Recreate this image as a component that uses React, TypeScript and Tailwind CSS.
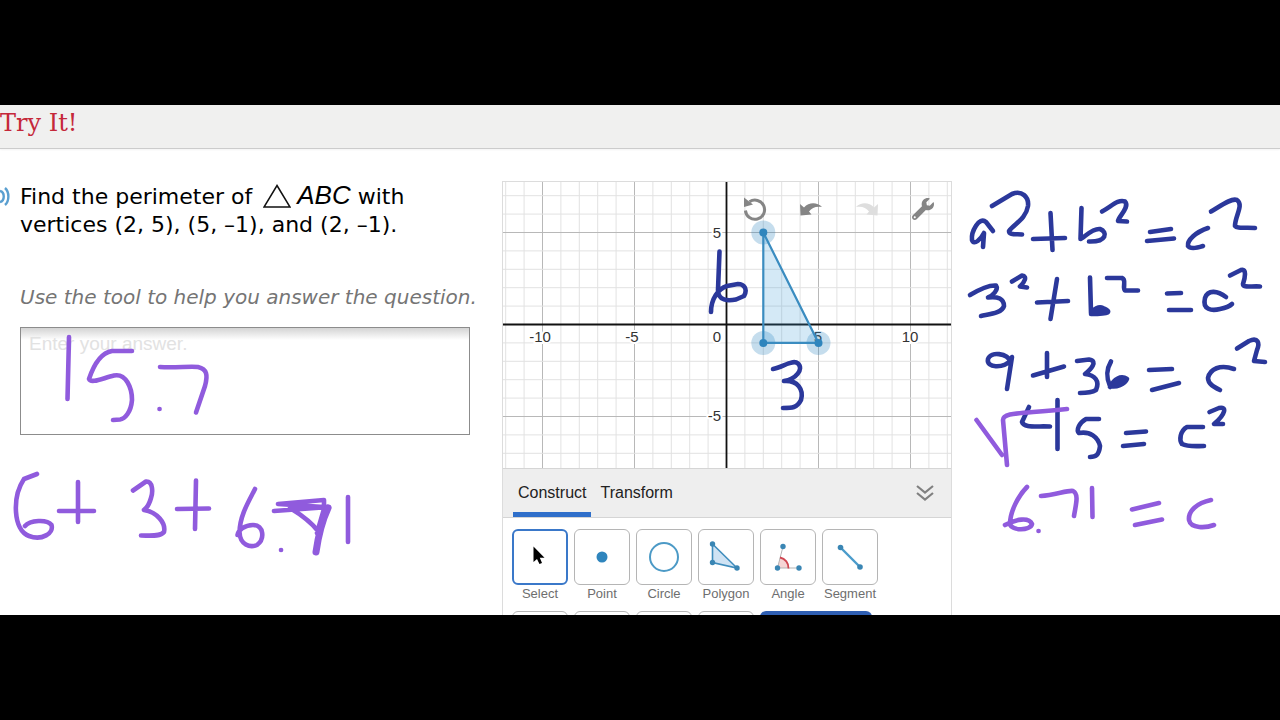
import { useState } from "react";
import type { ReactNode } from "react";
import { FaWrench } from "react-icons/fa";

const UNIT = 18.4;
const OX = 223.5;
const OY = 142.5;

const px = (x: number) => OX + x * UNIT;
const py = (y: number) => OY - y * UNIT;

const columns = Array.from({ length: 25 }, (_, i) => i - 12);
const rows = Array.from({ length: 15 }, (_, i) => i - 7);

const vertices = [
  { x: 2, y: 5 },
  { x: 5, y: -1 },
  { x: 2, y: -1 },
];

const blueInk = [
  // labels on the triangle
  "M719.5 251.5L718 290C718 301 728 301 736 299.5L744 296C748 289 744 284 738 284L727 286C718 289 711 299 711 312",
  "M773 369C783 367 793 359 798 363.5C804 369 796 379 784 381C798 380 804 390 801 400C797 408 792 408 783 408",
  // a2 + b2 = c2
  "M993 231L986 222C979 216 971 232 972 240C974 246 981 239 984 233L983 247",
  "M992 206L1012 194C1022 190 1029 197 1028 206C1026 219 1014 224 1009 231C1009 235 1015 234 1022 234.5",
  "M1050.5 213L1052.5 250M1033 239L1065 238",
  "M1081.5 208L1080.5 239C1084 238 1092 228 1100 229C1108 232 1107 242 1089 241.5",
  "M1102 211.5C1112 206 1118 199 1125 201.5C1130 207 1119 216 1118 221L1127 221.5",
  "M1150 232L1171 229M1147 241L1174 238.5",
  "M1208 228C1196 232 1187 240 1188 246C1190 249 1197 248 1203 246",
  "M1211 211.5C1222 205 1231 198 1237 200C1244 205 1235 216 1235 226C1237 229 1246 227 1255 228",
  // 3 squared + b2 = c2
  "M970 295C980 289 990 285 996 285.5C999 290 992 296 988 297.5C998 296 1004 299 1004 306C1002 313 990 314 981 316",
  "M1012 281.5L1022 275.5C1028 276 1024 283 1020 286.5L1027 287.5",
  "M1057 279L1050.5 319M1037 302.5L1068 301",
  "M1090 277.5L1091 313C1093 309 1099 306 1103 308C1112 312 1110 314 1091 314M1096 311L1107 312",
  "M1107 278L1122 278C1127 280 1122 287 1125 290.5L1138 290.5",
  "M1167 293.5L1181 293M1169 310L1191 310",
  "M1226 297C1218 291 1208 289 1205 298C1202 310 1212 311 1220 309C1225 308 1229 307 1232 304",
  "M1230 275.5L1241 270C1247 268 1245 278 1243 284C1243 288 1250 286 1260 286.5",
  // 9 + 36 = c2
  "M1011 362C1007 353 991 351 988 359C986 368 1003 369 1011 360L1012 357L1007 389",
  "M1047 353L1047 377M1033 375.5L1064 366.5",
  "M1077 361L1089 359.5C1099 361 1090 370 1085 374C1095 375 1100 381 1096 390C1091 393 1085 393 1080 393",
  "M1111 361.5C1106 370 1106 377 1110 386C1116 388 1125 384 1127 379C1121 375 1114 379 1110 387M1112 384L1122 380",
  "M1149 370L1172 369M1152 390L1179 383",
  "M1234 369C1220 364 1210 369 1208 378C1208 384 1214 387 1220 390",
  "M1237 348.5L1249 341C1258 337 1260 343 1257 350L1254 361L1265 362",
  // 45 = c2
  "M1029 407L1022 422C1024 428 1035 426 1050 426.5M1057.5 400L1057.5 449",
  "M1099 419L1086 419C1079 423 1076 430 1079 433C1090 431 1098 437 1100 446C1099 455 1096 457 1090 457",
  "M1126 433L1146 431.5M1123 446L1144 444",
  "M1203 427L1187 427C1180 431 1179 440 1182 444C1188 447 1196 446 1204 446",
  "M1209.5 412L1219 408C1227 406 1226 414 1214 424L1223 424",
];

const purpleInk = [
  // 15.7
  "M69 337L67.5 399",
  "M132 351L112 351C100 353 93 367 89 379C91 384 103 378 114 375.5C126 373 132 388 132 400C131 412 125 419 120 419.5L113 420",
  "M159.5 409L159.6 409",
  "M160 367C175 368 190 366 198 367C207 369 208 375 205 386L196 412.5",
  // 6 + 3 + 6.71
  "M37 474L24 479C12 497 13 530 29 536C42 541 54 533 51.5 525C47 519 30 520 25 526",
  "M78 482L78 522M59 511L94 511",
  "M133 490.5L146 481.5C153 481 153 492 151 498C149 505 147 508 144 510C157 512 166 523 164 532C160 537 150 535.5 141 535.5",
  "M196 480.5L195 529M177 509L209 508.5",
  "M255 489C249 501 240 515 239.5 532C240 545 250 548 257 545C265 539 264 525 253 525C245 525 238 530 237.5 535",
  "M281 550L281.1 550",
  "M278 504L324 500L324 507L278 504M274 511L329 507M290 508C300 514 311 522 318 531M324 509L317 533",
  "M348 497L348 542",
  // square root and 6.71 = c
  "M976.5 420L1002 455M1007 465L1003 420C1003 412 1020 414 1067 409",
  "M1027 487C1018 496 1010 512 1010 524C1012 531 1030 531 1032 524C1029 517 1016 519 1005 525",
  "M1038.5 531L1038.6 531",
  "M1041 496C1055 495 1068 490 1073 491C1079 494 1076 504 1074 516",
  "M1092 488L1092.5 517",
  "M1132 509.5L1159 503M1135 525L1162 519.5",
  "M1211 500C1197 503 1188 511 1189 520C1191 529 1206 528 1214 525",
];

const Ink = () => (
  <svg
    className="pointer-events-none absolute left-0 top-0 w-full"
    viewBox="0 105 1280 510"
    fill="none"
    strokeWidth="4.6"
    strokeLinecap="round"
    strokeLinejoin="round"
    aria-hidden="true"
  >
    <g stroke="#2b389b">
      {blueInk.map((d) => (
        <path key={d} d={d} />
      ))}
    </g>
    <g stroke="#905bdd">
      {purpleInk.map((d) => (
        <path key={d} d={d} />
      ))}
      <path d="M328 508C322 521 318 538 316 552" strokeWidth="7" />
    </g>
  </svg>
);

const Graph = () => (
  <svg viewBox="0 0 448 286" className="block w-full" role="img" aria-label="Coordinate plane">
    {columns.map((n) => (
      <path key={n} d={`M${px(n)} 0V286`} stroke={n % 5 === 0 ? "#b8b8b8" : "#e2e2e2"} />
    ))}
    {rows.map((n) => (
      <path key={n} d={`M0 ${py(n)}H448`} stroke={n % 5 === 0 ? "#b8b8b8" : "#e2e2e2"} />
    ))}
    <path d={`M0 ${OY}H448M${OX} 0V286`} stroke="#111" strokeWidth="1.8" />
    <g
      fill="#333"
      stroke="#fff"
      strokeWidth="4"
      paintOrder="stroke"
      className="font-['Liberation_Sans',sans-serif] text-[15px]"
    >
      <text x="37" y="160" textAnchor="middle">-10</text>
      <text x="129" y="160" textAnchor="middle">-5</text>
      <text x="315" y="160" textAnchor="middle">5</text>
      <text x="407" y="160" textAnchor="middle">10</text>
      <text x="218" y="160" textAnchor="end">0</text>
      <text x="218" y="56" textAnchor="end">5</text>
      <text x="218" y="239" textAnchor="end">-5</text>
    </g>
    {vertices.map((v) => (
      <circle key={`${v.x},${v.y}`} cx={px(v.x)} cy={py(v.y)} r="12" fill="#2f85bd" fillOpacity="0.28" />
    ))}
    <polygon
      points={vertices.map((v) => `${px(v.x)},${py(v.y)}`).join(" ")}
      fill="#3c9bd6"
      fillOpacity="0.22"
      stroke="#3a8cc0"
      strokeWidth="2.2"
    />
    {vertices.map((v) => (
      <circle key={`${v.x},${v.y}`} cx={px(v.x)} cy={py(v.y)} r="4" fill="#2f85bd" />
    ))}
  </svg>
);

const graphActions: { label: string; icon: ReactNode }[] = [
  {
    label: "Reset",
    icon: (
      <svg width="24" height="24" viewBox="0 0 24 24">
        <path d="M2.4 13.5A9.6 9.6 0 1 0 6.5 4.8" fill="none" stroke="#858585" strokeWidth="3" />
        <path d="M1 0.5V10L10 7.5Z" fill="#858585" />
      </svg>
    ),
  },
  {
    label: "Undo",
    icon: (
      <svg width="24" height="24" viewBox="0 0 24 24" fill="#858585">
        <path d="M1 7L5 10.5C10 5 18 5 23 10C17 9 13 10.5 10 14.5L12.5 17.5L1.5 18.5Z" />
      </svg>
    ),
  },
  {
    label: "Redo",
    icon: (
      <svg width="24" height="24" viewBox="0 0 24 24" fill="#dedede">
        <path d="M23 7L19 10.5C14 5 6 5 1 10C7 9 11 10.5 14 14.5L11.5 17.5L22.5 18.5Z" />
      </svg>
    ),
  },
  { label: "Settings", icon: <FaWrench size={22} color="#858585" /> },
];

const tools: { label: string; icon: ReactNode }[] = [
  {
    label: "Select",
    icon: <path d="M20.5 16.5V32L24 29L26.500 34L29 33L26.800 27.800H31.500Z" fill="#000" />,
  },
  { label: "Point", icon: <circle cx="27" cy="27" r="5.5" fill="#2f85bd" /> },
  {
    label: "Circle",
    icon: <circle cx="27" cy="27" r="14" fill="none" stroke="#4c9ac6" strokeWidth="2" />,
  },
  {
    label: "Polygon",
    icon: (
      <>
        <path d="M13.5 14L38 38L13.5 32.5Z" fill="#cfe3f4" stroke="#3f8dbd" strokeWidth="1.6" />
        <g fill="#3a86b4">
          <circle cx="13.5" cy="14" r="2.7" />
          <circle cx="13.5" cy="32.5" r="2.7" />
          <circle cx="38" cy="38" r="2.7" />
        </g>
      </>
    ),
  },
  {
    label: "Angle",
    icon: (
      <>
        <path d="M16.5 38L19 27.5A10.5 10.5 0 0 1 27.5 38Z" fill="#f6d5d5" />
        <path d="M22 16.5L16.5 38H38" fill="none" stroke="#b5b5b5" />
        <path d="M19 27.5A10.5 10.5 0 0 1 27.5 38.5" fill="none" stroke="#cf4651" strokeWidth="1.8" />
        <g fill="#3a86b4">
          <circle cx="22" cy="16.5" r="2.7" />
          <circle cx="16.5" cy="38" r="2.7" />
          <circle cx="38" cy="38" r="2.7" />
        </g>
      </>
    ),
  },
  {
    label: "Segment",
    icon: (
      <>
        <path d="M17.5 17.5L37 37" stroke="#4a9bcb" strokeWidth="2.4" />
        <g fill="#3a86b4">
          <circle cx="17.5" cy="17.5" r="2.8" />
          <circle cx="37" cy="37" r="2.8" />
        </g>
      </>
    ),
  },
];

const Question = () => (
  <section className="min-w-0 pr-8 pt-8 font-['DejaVu_Sans',sans-serif]">
    <div className="flex">
      <button type="button" aria-label="Read aloud" className="w-5 shrink-0 self-start">
        <svg width="12" height="32" viewBox="0 0 12 32" fill="none" stroke="#5a9fd0" strokeWidth="2.4">
          <path d="M0 10C5 11 5 20 0 21M5 7C9.500 11 9.500 20 5 24" />
        </svg>
      </button>
      <p className="text-[22px] leading-7 text-black">
        Find the perimeter of{" "}
        <svg className="ml-1 mr-1.5 inline-block align-[-4px]" width="28" height="24" viewBox="0 0 28 24" role="img" aria-label="triangle">
          <path d="M14 1.5L27 23H1Z" fill="none" stroke="#111" strokeWidth="1.5" />
        </svg>
        <i className="font-['Liberation_Sans',sans-serif] text-[26px] leading-7">ABC</i> with
        <br />
        vertices (2, 5), (5, –1), and (2, –1).
      </p>
    </div>
    <div className="mt-11 pl-5">
      <label htmlFor="answer" className="block whitespace-nowrap text-xl italic text-[#757575]">
        Use the tool to help you answer the question.
      </label>
      <textarea
        id="answer"
        placeholder="Enter your answer."
        className="mt-4 block h-[108px] w-full resize-none border border-[#8c8c8c] bg-linear-to-b from-[#d4d4d4] to-white to-[12px] px-2 py-0.5 font-['Liberation_Sans',sans-serif] text-[19px] leading-7 text-black outline-none placeholder:text-[#e2e2e2]"
      />
    </div>
  </section>
);

const GeometryTool = () => {
  const [tab, setTab] = useState("Construct");
  const [tool, setTool] = useState("Select");

  return (
    <section className="mt-8 min-w-0 border border-[#dcdcdc] font-['Liberation_Sans',sans-serif]">
      <div className="relative">
        <Graph />
        <div className="absolute right-4 top-[15px] flex gap-8">
          {graphActions.map((a) => (
            <button key={a.label} type="button" aria-label={a.label} className="flex size-6 items-center justify-center">
              {a.icon}
            </button>
          ))}
        </div>
      </div>
      <div className="flex h-[50px] items-stretch gap-1 border-y border-[#d5d5d5] bg-[#eeeeee] pl-2.5 pr-4">
        {["Construct", "Transform"].map((t) => (
          <button
            key={t}
            type="button"
            onClick={() => setTab(t)}
            className={`border-b-5 px-[5px] pt-1 text-base text-[#222] ${
              tab === t ? "border-[#2f6fca]" : "border-transparent"
            }`}
          >
            {t}
          </button>
        ))}
        <button type="button" aria-label="Collapse tools" className="ml-auto">
          <svg width="20" height="20" viewBox="0 0 20 20" fill="none" stroke="#808080" strokeWidth="2.2">
            <path d="M2 3L10 9.5L18 3M2 10L10 16.5L18 10" />
          </svg>
        </button>
      </div>
      <div className="flex flex-wrap gap-x-1.5 gap-y-2 px-[9px] py-[11px]">
        {tools.map((t) => (
          <button key={t.label} type="button" onClick={() => setTool(t.label)} className="flex w-14 flex-col items-center">
            <span
              className={`flex size-14 items-center justify-center rounded-md bg-white ${
                tool === t.label ? "border-2 border-[#3a78c9]" : "border border-[#b5b5b5]"
              }`}
            >
              <svg width="54" height="54" viewBox="0 0 54 54" className="shrink-0">
                {t.icon}
              </svg>
            </span>
            <span className="text-[13px] leading-[18px] text-[#6e6e6e]">{t.label}</span>
          </button>
        ))}
        <div className="flex basis-full gap-1.5">
          {["Line", "Ray", "Vector", "Text"].map((name) => (
            <button key={name} type="button" aria-label={name} className="size-14 rounded-md border border-[#b5b5b5]" />
          ))}
          <button type="button" aria-label="Delete" className="h-14 w-28 rounded-md bg-[#2f5fb3]" />
        </div>
      </div>
    </section>
  );
};

export default function App() {
  return (
    <div className="flex h-screen flex-col bg-black py-[105px]">
      <main className="relative min-h-0 flex-1 overflow-hidden bg-white">
        <header className="h-11 border-b border-[#cccccc] bg-[#f0f0ef] shadow-xs">
          <h1 className="font-['DejaVu_Serif',serif] text-2xl leading-9 text-[#c5283a]">Try It!</h1>
        </header>
        <div className="grid grid-cols-[502fr_450fr_328fr] items-start">
          <Question />
          <GeometryTool />
        </div>
        <Ink />
      </main>
    </div>
  );
}
